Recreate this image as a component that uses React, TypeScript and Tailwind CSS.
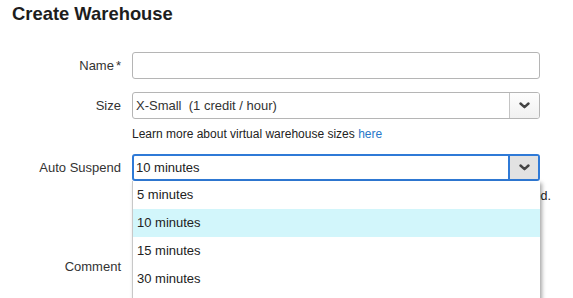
import React from "react";

function Chevron() {
  return (
    <svg width="11" height="7" viewBox="0 0 11 7" fill="none">
      <path d="M1.5 1.5 L5.5 5.2 L9.5 1.5" stroke="#444" strokeWidth="2.4" strokeLinecap="round" strokeLinejoin="round" />
    </svg>
  );
}

export default function App() {
  const options = ["5 minutes", "10 minutes", "15 minutes", "30 minutes"];
  return (
    <div className="relative w-[573px] h-[298px] overflow-hidden bg-white text-[#333] font-['Liberation_Sans',Arial,sans-serif]">
      <h1 className="pl-3 pt-[3px] h-[25px] text-[18.4px] leading-[22px] font-bold text-[#1d1d1d]">Create Warehouse</h1>
      <div className="mt-[27px] grid grid-cols-[121px_408px] gap-x-[11px]">
        {/* Name */}
        <div className="flex items-center justify-end text-[13px] h-[27px]">
          Name<span className="ml-[2px]">*</span>
        </div>
        <input className="h-[27px] rounded-[3px] border border-[#b5b5b5] px-1 text-[13px] outline-none" />

        {/* Size */}
        <div className="mt-[13px] flex items-center justify-end text-[13px] h-[27px]">Size</div>
        <div className="mt-[13px] flex h-[27px] rounded-[3px] border border-[#b5b5b5] overflow-hidden">
          <div className="flex-1 flex items-center pl-[3px] text-[13px] whitespace-pre">X-Small  (1 credit / hour)</div>
          <div className="w-[30px] flex items-center justify-center border-l border-[#c4c4c4] bg-gradient-to-b from-[#fdfdfd] to-[#f1f1f1]">
            <Chevron />
          </div>
        </div>

        <div />
        <div className="mt-[7px] h-[16px] text-[12px] leading-[16px] text-[#222]">
          Learn more about virtual warehouse sizes <span className="text-[#2778c9]">here</span>
        </div>

        {/* Auto Suspend */}
        <div className="mt-[12px] flex items-center justify-end text-[13px] h-[27px]">Auto Suspend</div>
        <div className="relative mt-[12px]">
          <div className="flex h-[27px] rounded-[3px] border-2 border-[#2f7ad7] overflow-hidden">
            <div className="flex-1 flex items-center pl-[2px] text-[13px] text-[#222]">10 minutes</div>
            <div className="w-[30px] flex items-center justify-center border-l-2 border-[#2f7ad7] bg-[#e2e2e2]">
              <Chevron />
            </div>
          </div>
          <div className="absolute z-10 left-0 top-[27px] w-[408px] pb-[40px] bg-white border-l border-[#c8c8c8] shadow-[2px_2px_4px_rgba(0,0,0,0.35)]">
            {options.map((o) => (
              <div
                key={o}
                className={
                  o === "10 minutes"
                    ? "h-[28px] flex items-center pl-[4px] text-[13px] text-[#222] bg-[#d2f6fb]"
                    : "h-[28px] flex items-center pl-[4px] text-[13px] text-[#222]"
                }
              >
                {o}
              </div>
            ))}
          </div>
        </div>

        <div />
        <div className="mt-[7px] h-[16px] w-[419px] flex justify-end whitespace-nowrap text-[12.5px] leading-[16px] text-[#222]">
          <span>Warehouse will be suspended when inactive for the selected period.</span>
        </div>

        {/* Comment */}
        <div className="mt-[33px] flex items-center justify-end text-[13px] h-[60px]">Comment</div>
        <textarea className="mt-[33px] h-[60px] rounded-[3px] border border-[#b5b5b5] resize-none outline-none" />
      </div>
    </div>
  );
}
